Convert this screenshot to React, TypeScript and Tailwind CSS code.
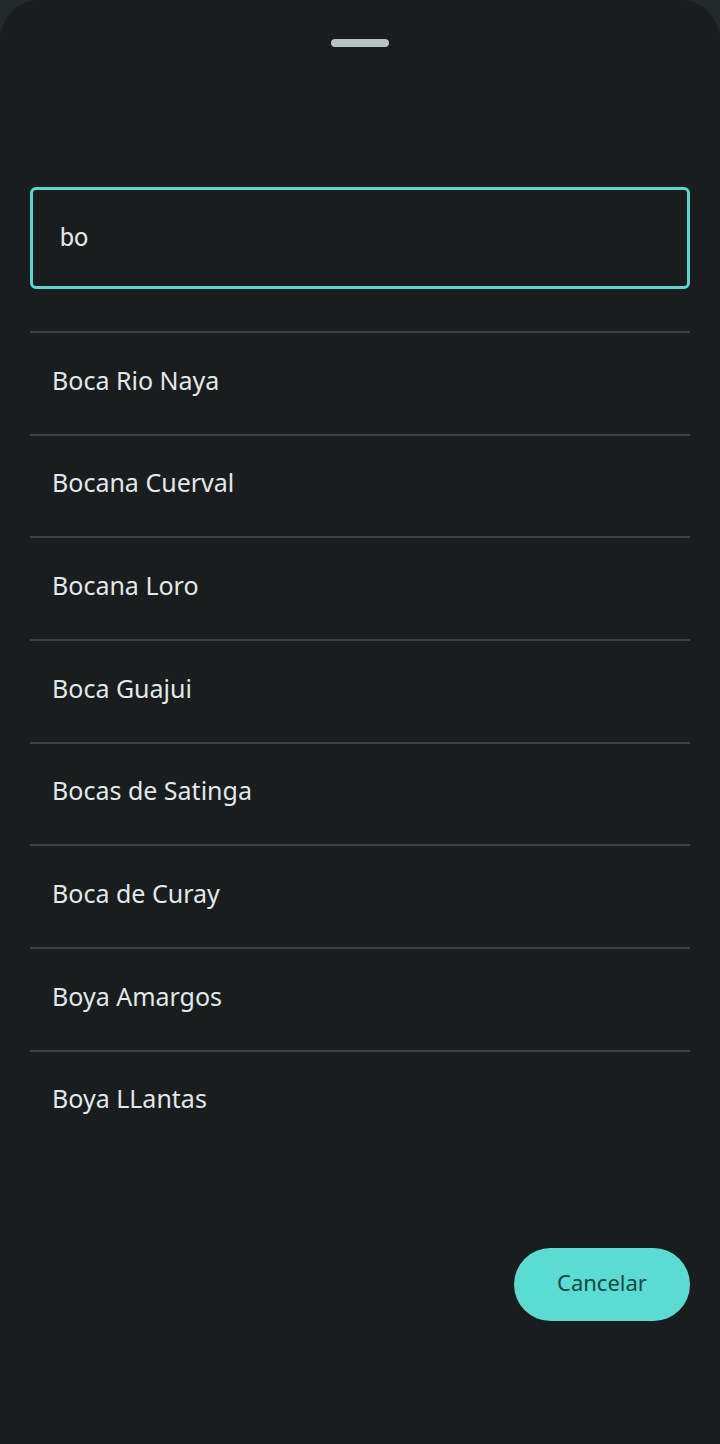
import React, { useState } from 'react';

const places = [
  'Boca Rio Naya',
  'Bocana Cuerval',
  'Bocana Loro',
  'Boca Guajui',
  'Bocas de Satinga',
  'Boca de Curay',
  'Boya Amargos',
  'Boya LLantas',
];

export default function App() {
  const [query, setQuery] = useState('bo');

  return (
    <div className="min-h-[1444px] w-[720px] bg-[#22272a]">
      <div className="flex min-h-[1444px] flex-col rounded-t-[40px] bg-[#191d1e] px-[30px] pt-[39px] font-['Noto_Sans',sans-serif]">
        {/* Drag handle */}
        <div className="mx-auto h-[8px] w-[58px] rounded-full bg-[#b9c3c3]" />

        {/* Search box */}
        <div className="mt-[140px] flex h-[102px] items-center rounded-[6px] border-[3px] border-[#5ad6cc] bg-[#191d1e] px-[27px]">
          <input
            value={query}
            onChange={(e) => setQuery(e.target.value)}
            className="w-full bg-transparent font-['Roboto',sans-serif] text-[25px] text-[#e4e8e8] outline-none"
          />
        </div>

        {/* Results */}
        <ul className="mt-[42px]">
          {places.map((name) => (
            <li
              key={name}
              className="flex h-[102.7px] items-center border-t-2 border-[#3c4244] px-[22px] pb-[6px] text-[25px] text-[#e3e8e8]"
            >
              {name}
            </li>
          ))}
        </ul>

        <div className="mt-[95px] flex justify-end">
          <button className="h-[73px] w-[176px] rounded-full bg-[#5adcd2] pb-[4px] text-[22px] text-[#174845]">
            Cancelar
          </button>
        </div>
      </div>
    </div>
  );
}
